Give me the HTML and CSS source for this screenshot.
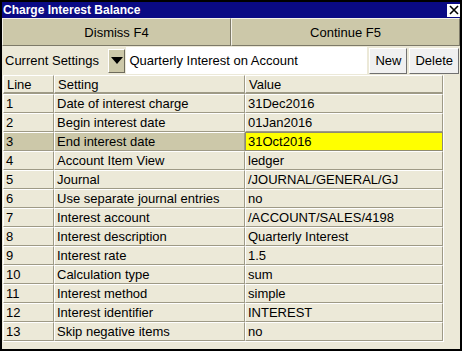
FILE: index.html
```html
<!DOCTYPE html>
<html lang="en">
<head>
    <meta charset="UTF-8">
    <title>Charge Interest Balance</title>
    <link rel="stylesheet" href="styles.css">
</head>
<body>
    <div class="window">
        <div class="titlebar">
            <span class="title">Charge Interest Balance</span>
            <span class="close">
                <svg width="12" height="12" viewBox="0 0 12 12"><path d="M2 2 L10 10 M10 2 L2 10" stroke="#000" stroke-width="1.6"/></svg>
            </span>
        </div>

        <div class="actions">
            <button class="big-button">Dismiss F4</button>
            <button class="big-button">Continue F5</button>
        </div>

        <div class="toolbar">
            <span class="label">Current Settings</span>
            <button class="drop-button">
                <svg width="12" height="7" viewBox="0 0 12 7"><path d="M0 0 H12 L6 7 Z" fill="#000"/></svg>
            </button>
            <div class="name-field">Quarterly Interest on Account</div>
            <button class="small-button">New</button>
            <button class="small-button">Delete</button>
        </div>

        <table class="grid">
            <thead>
                <tr><th class="col-line">Line</th><th class="col-setting">Setting</th><th>Value</th></tr>
            </thead>
            <tbody>
                <tr><td>1</td><td>Date of interest charge</td><td>31Dec2016</td></tr>
                <tr><td>2</td><td>Begin interest date</td><td>01Jan2016</td></tr>
                <tr class="selected"><td>3</td><td>End interest date</td><td class="editing">31Oct2016</td></tr>
                <tr><td>4</td><td>Account Item View</td><td>ledger</td></tr>
                <tr><td>5</td><td>Journal</td><td>/JOURNAL/GENERAL/GJ</td></tr>
                <tr><td>6</td><td>Use separate journal entries</td><td>no</td></tr>
                <tr><td>7</td><td>Interest account</td><td>/ACCOUNT/SALES/4198</td></tr>
                <tr><td>8</td><td>Interest description</td><td>Quarterly Interest</td></tr>
                <tr><td>9</td><td>Interest rate</td><td>1.5</td></tr>
                <tr><td>10</td><td>Calculation type</td><td>sum</td></tr>
                <tr><td>11</td><td>Interest method</td><td>simple</td></tr>
                <tr><td>12</td><td>Interest identifier</td><td>INTEREST</td></tr>
                <tr><td>13</td><td>Skip negative items</td><td>no</td></tr>
            </tbody>
        </table>
    </div>
</body>
</html>
```

FILE: styles.css
```css
body {
    margin: 0;
    font-family: "Liberation Sans", Arial, sans-serif;
    font-size: 13px;
    color: #000;
    background-color: #000;
}
.window {
    box-sizing: border-box;
    width: 462px;
    height: 351px;
    border: 2px solid #000;
    background-color: #ece9d8;
}
.titlebar {
    display: flex;
    align-items: center;
    justify-content: space-between;
    height: 16px;
    background-color: #0a0a84;
    color: #fff;
}
.title {
    font-weight: bold;
    font-size: 12px;
    padding-left: 1px;
}
.close {
    display: flex;
    align-items: center;
    justify-content: center;
    width: 13px;
    height: 13px;
    background-color: #fff;
}
.actions {
    display: flex;
    height: 28px;
}
.big-button {
    flex: 1;
    font-family: inherit;
    font-size: 13px;
    background-color: #ccc8a9;
    border: 1px solid;
    border-color: #f4f2e8 #7d7a68 #7d7a68 #f4f2e8;
    padding: 0;
    color: #000;
}
.toolbar {
    display: flex;
    align-items: center;
    height: 29px;
    padding: 0 1px 0 3px;
}
.label {
    width: 103px;
}
.drop-button {
    display: flex;
    align-items: center;
    justify-content: center;
    width: 18px;
    height: 24px;
    padding: 0;
    background-color: #ccc8a9;
    border: 1px solid;
    border-color: #fff #6e6b5c #6e6b5c #fff;
}
.name-field {
    display: flex;
    align-items: center;
    width: 239px;
    height: 27px;
    margin-left: 1px;
    padding-left: 3px;
    background-color: #fff;
}
.small-button {
    height: 26px;
    margin-left: 2px;
    padding: 0 5px;
    font-family: inherit;
    font-size: 13px;
    background-color: #f0f0f0;
    border: 1px solid;
    border-color: #fff #707070 #707070 #fff;
    color: #000;
}
.grid {
    margin-left: 1px;
    width: 441px;
    border-collapse: separate;
    border-spacing: 0;
    border-right: 1px solid #fff;
    border-bottom: 1px solid #fff;
}
.grid th,
.grid td {
    height: 17px;
    padding: 0 0 0 2px;
    text-align: left;
    font-weight: normal;
    white-space: nowrap;
    border-top: 1px solid #fff;
    border-left: 1px solid #fff;
    border-bottom: 1px solid #9e9a86;
    border-right: 1px solid #9e9a86;
}
.grid th {
    height: 16px;
    padding-left: 3px;
    border-bottom-width: 2px;
}
.col-line {
    width: 46px;
}
.col-setting {
    width: 186px;
}
.selected td {
    background-color: #ccc8a9;
}
.selected td.editing {
    background-color: #ffff00;
    border-color: #8f8b70;
}
```
